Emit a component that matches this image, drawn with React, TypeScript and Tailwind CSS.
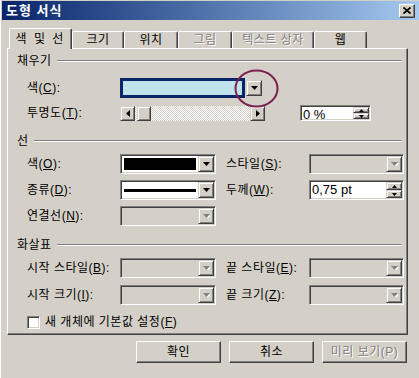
import type { ReactNode } from "react";

const SUNKEN =
  "border border-t-[#808080] border-l-[#808080] border-b-white border-r-white shadow-[inset_1px_1px_0_#404040,inset_-1px_-1px_0_#d4d0c8]";
const RAISED =
  "border border-t-[#d4d0c8] border-l-[#d4d0c8] border-b-[#404040] border-r-[#404040] shadow-[inset_1px_1px_0_#fff,inset_-1px_-1px_0_#808080]";
const BUTTON =
  "border border-t-white border-l-white border-b-[#404040] border-r-[#404040] shadow-[inset_-1px_-1px_0_#808080]";
const GRAY = "text-[#808080] [text-shadow:1px_1px_0_#fff]";

function Arrow({ dir, gray = false }: { dir: "up" | "down" | "left" | "right"; gray?: boolean }) {
  const fill = gray ? "#808080" : "#000";
  if (dir === "down")
    return (
      <svg width="7" height="4" viewBox="0 0 7 4">
        {gray && <polygon points="1,1 8,1 4.5,5" fill="#fff" />}
        <polygon points="0,0 7,0 3.5,4" fill={fill} />
      </svg>
    );
  if (dir === "up")
    return (
      <svg width="5" height="3" viewBox="0 0 5 3">
        <polygon points="0,3 5,3 2.5,0" fill={fill} />
      </svg>
    );
  if (dir === "left")
    return (
      <svg width="4" height="7" viewBox="0 0 4 7">
        <polygon points="4,0 4,7 0,3.5" fill={fill} />
      </svg>
    );
  return (
    <svg width="4" height="7" viewBox="0 0 4 7">
      <polygon points="0,0 0,7 4,3.5" fill={fill} />
    </svg>
  );
}

function DropBtn({ gray = false }: { gray?: boolean }) {
  return (
    <div className={`${RAISED} flex w-[16px] shrink-0 items-center justify-center bg-[#d4d0c8]`}>
      <Arrow dir="down" gray={gray} />
    </div>
  );
}

function Combo({ className, disabled = false, children }: { className: string; disabled?: boolean; children?: ReactNode }) {
  return (
    <div className={`${SUNKEN} flex h-[20px] p-[1px] ${disabled ? "bg-[#d4d0c8]" : "bg-white"} ${className}`}>
      <div className="flex flex-1 items-center p-[2px]">{children}</div>
      <DropBtn gray={disabled} />
    </div>
  );
}

function Spinner({ className, value }: { className: string; value: string }) {
  return (
    <div className={`${SUNKEN} flex p-[1px] bg-white ${className}`}>
      <div className="flex-1 pl-[1px] text-[13px] leading-[15px] tracking-normal">{value}</div>
      <div className="flex w-[16px] flex-col">
        <div className={`${RAISED} flex flex-1 items-center justify-center bg-[#d4d0c8]`}>
          <Arrow dir="up" />
        </div>
        <div className={`${RAISED} flex flex-1 items-center justify-center bg-[#d4d0c8]`}>
          <svg width="5" height="3" viewBox="0 0 5 3">
            <polygon points="0,0 5,0 2.5,3" fill="#000" />
          </svg>
        </div>
      </div>
    </div>
  );
}

function Header({ title, className }: { title: string; className: string }) {
  return (
    <div className={`flex h-[14px] items-center pr-[6px] ${className}`}>
      <span>{title}</span>
      <div className="ml-[5px] h-[2px] flex-1 border-t border-b border-t-[#808080] border-b-white" />
    </div>
  );
}

function L({ pre, k, post = "):" }: { pre: string; k: string; post?: string }) {
  return (
    <>
      {pre}(<u>{k}</u>{post}
    </>
  );
}

const tabs = [
  { label: "색 및 선", w: "w-[63px]", sel: true },
  { label: "크기", w: "w-[52px]" },
  { label: "위치", w: "w-[54px]" },
  { label: "그림", w: "w-[54px]", dis: true },
  { label: "텍스트 상자", w: "w-[82px]", dis: true },
  { label: "웹", w: "w-[53px]" },
];

export default function App() {
  return (
    <div className="relative h-[378px] w-[419px] overflow-hidden border-t border-l border-t-[#d4d0c8] border-l-white bg-[#d4d0c8] font-['Liberation_Sans','Noto_Sans_CJK_KR',sans-serif] text-[12px] leading-[14px] tracking-[0.5px] text-black">
      {/* title bar */}
      <div className="ml-[1px] flex h-[19px] items-center justify-between bg-gradient-to-r from-[#0a246a] to-[#a6caf0] pr-[4px] pl-[4px]">
        <span className="text-[13px] font-bold tracking-[1px] text-white">도형 서식</span>
        <div className={`${BUTTON} flex h-[14px] w-[16px] items-center justify-center bg-[#d4d0c8]`}>
          <svg width="8" height="7" viewBox="0 0 8 7">
            <path d="M0.5 0.5L7.5 6.5M7.5 0.5L0.5 6.5" stroke="#000" strokeWidth="1.8" />
          </svg>
        </div>
      </div>

      {/* tabs */}
      <div className="mt-[8px] flex h-[20px] items-end pl-[8px]">
        {tabs.map((t) => (
          <div
            key={t.label}
            className={`${t.w} flex items-center justify-center rounded-t-[2px] border-t border-l border-r border-t-white border-l-white border-r-[#404040] bg-[#d4d0c8] shadow-[inset_-1px_0_0_#808080] ${
              t.sel ? "relative z-10 mb-[-1px] h-[21px] tracking-[2px]" : "h-[17px]"
            } ${t.dis ? GRAY : ""}`}
          >
            {t.label}
          </div>
        ))}
      </div>

      {/* panel */}
      <div className="ml-[6px] flex h-[287px] w-[401px] flex-col border border-t-white border-l-white border-b-[#404040] border-r-[#404040] pl-[9px] shadow-[inset_-1px_-1px_0_#808080]">
        <Header title="채우기" className="mt-[5px]" />
        <div className="mt-[10px] flex h-[20px] items-center pl-[10px]">
          <span className="w-[93px]">
            <L pre="색" k="C" />
          </span>
          <div className="h-[20px] w-[125px] border-[3px] border-[#0a246a] bg-[#bfe3ea]" />
          <div className="ml-[1px] flex h-[16px]">
            <DropBtn />
          </div>
        </div>
        <div className="mt-[7px] flex h-[16px] items-center pl-[10px]">
          <span className="w-[93px]">
            <L pre="투명도" k="T" />
          </span>
          <div className="flex h-[15px]">
            <div className={`${RAISED} flex w-[15px] items-center justify-center`}>
              <Arrow dir="left" />
            </div>
            <div className="w-[2px] bg-[repeating-conic-gradient(#d4d0c8_0_25%,#fff_0_50%)] bg-[length:2px_2px]" />
            <div className={`${RAISED} w-[14px]`} />
            <div className="w-[99px] bg-[repeating-conic-gradient(#d4d0c8_0_25%,#fff_0_50%)] bg-[length:2px_2px]" />
            <div className={`${RAISED} flex w-[15px] items-center justify-center`}>
              <Arrow dir="right" />
            </div>
          </div>
          <Spinner className="ml-[35px] h-[16px] w-[71px]" value="0 %" />
        </div>

        <Header title="선" className="mt-[13px]" />
        <div className="mt-[6px] flex h-[20px] items-center pl-[10px]">
          <span className="w-[93px]">
            <L pre="색" k="O" />
          </span>
          <Combo className="w-[96px]">
            <div className="h-full w-full bg-black" />
          </Combo>
          <span className="ml-[10px] w-[83px]">
            <L pre="스타일" k="S" />
          </span>
          <Combo className="w-[95px]" disabled />
        </div>
        <div className="mt-[6px] flex h-[20px] items-center pl-[10px]">
          <span className="w-[93px]">
            <L pre="종류" k="D" />
          </span>
          <Combo className="w-[96px]">
            <div className="h-[3px] w-full bg-black" />
          </Combo>
          <span className="ml-[10px] w-[83px]">
            <L pre="두께" k="W" />
          </span>
          <Spinner className="h-[20px] w-[95px]" value="0,75 pt" />
        </div>
        <div className="mt-[6px] flex h-[20px] items-center pl-[10px]">
          <span className="w-[93px]">
            <L pre="연결선" k="N" />
          </span>
          <Combo className="w-[96px]" disabled />
        </div>

        <Header title="화살표" className="mt-[12px]" />
        <div className="mt-[6px] flex h-[20px] items-center pl-[10px]">
          <span className="w-[93px]">
            <L pre="시작 스타일" k="B" />
          </span>
          <Combo className="w-[96px]" disabled />
          <span className="ml-[10px] w-[83px]">
            <L pre="끝 스타일" k="E" />
          </span>
          <Combo className="w-[95px]" disabled />
        </div>
        <div className="mt-[7px] flex h-[20px] items-center pl-[10px]">
          <span className="w-[93px]">
            <L pre="시작 크기" k="I" />
          </span>
          <Combo className="w-[96px]" disabled />
          <span className="ml-[10px] w-[83px]">
            <L pre="끝 크기" k="Z" />
          </span>
          <Combo className="w-[95px]" disabled />
        </div>
        <div className="mt-[10px] flex h-[14px] items-center gap-[5px] pl-[10px]">
          <div className={`${SUNKEN} h-[13px] w-[13px] bg-white`} />
          <span>
            <L pre="새 개체에 기본값 설정" k="F" post=")" />
          </span>
        </div>
      </div>

      {/* buttons */}
      <div className="mt-[6px] flex gap-[8px] pl-[135px]">
        <div className={`${BUTTON} flex h-[22px] w-[85px] items-center justify-center`}>확인</div>
        <div className={`${BUTTON} flex h-[22px] w-[85px] items-center justify-center`}>취소</div>
        <div className={`${BUTTON} ${GRAY} flex h-[22px] w-[85px] items-center justify-center`}>미리 보기(P)</div>
      </div>

      {/* highlight circle */}
      <svg className="absolute top-[68px] left-[233px]" width="45" height="39" viewBox="0 0 45 39">
        <ellipse cx="22.5" cy="19.5" rx="21" ry="18" fill="none" stroke="#7b1f4f" strokeWidth="2" />
      </svg>
    </div>
  );
}
